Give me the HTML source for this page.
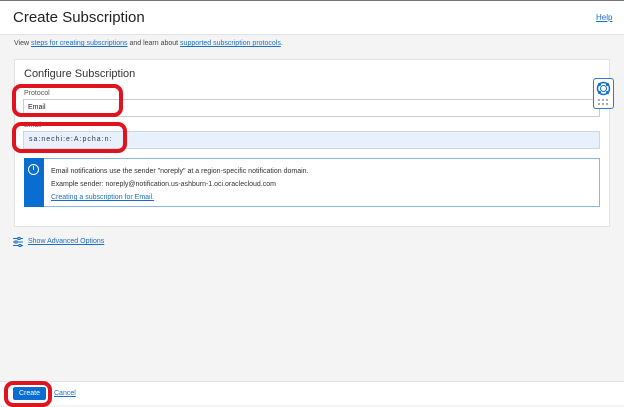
<!DOCTYPE html>
<html><head><style>
*{margin:0;padding:0;box-sizing:border-box}
body{width:624px;height:405px;background:#f4f4f4;font-family:"Liberation Sans",sans-serif;position:relative;overflow:hidden;color:#333}
.a{position:absolute}
a,.lk{color:#1a6fc4;text-decoration:underline}
.red{position:absolute;border:4.5px solid #e0141e;border-radius:9px}
</style></head><body>
<div class="a" style="left:0;top:0;width:624px;height:1px;background:#777"></div>
<div class="a" style="left:0;top:1px;width:624px;height:34px;background:#fff;border-bottom:1px solid #e4e4e4"></div>
<div class="a" style="left:13px;top:9px;font-size:15px;color:#222">Create Subscription</div>
<div class="a lk" style="left:596px;top:13px;font-size:8px">Help</div>
<div class="a" style="left:14px;top:40px;font-size:7px;color:#444">View <span class="lk">steps for creating subscriptions</span> and learn about <span class="lk">supported subscription protocols</span>.</div>
<div class="a" style="left:14px;top:59px;width:596px;height:168px;background:#fff;border:1px solid #e2e2e2"></div>
<div class="a" style="left:24px;top:68px;font-size:11px;color:#333">Configure Subscription</div>
<div class="a" style="left:24px;top:90px;font-size:7px;color:#555">Protocol</div>
<div class="a" style="left:23px;top:99px;width:577px;height:18px;border:1px solid #ccc;background:#fff"></div>
<div class="a" style="left:28px;top:104px;font-size:7px;color:#222">Email</div>
<div class="a" style="left:24px;top:122px;font-size:7px;color:#555">Email</div>
<div class="a" style="left:23px;top:131px;width:577px;height:18px;border:1px solid #c8d8ec;background:#e8f0fb"></div>
<div class="a" style="left:29px;top:136px;font-size:7px;color:#335;letter-spacing:1px">sa:nechi:e:A:pcha:n:</div>
<div class="a" style="left:24px;top:158px;width:576px;height:49px;border:1px solid #8ab8e6;background:#fff"></div>
<div class="a" style="left:24px;top:158px;width:20px;height:49px;background:#0a6ed1"></div>
<div class="a" style="left:28px;top:164px;width:11px;height:11px;border:1.5px solid #fff;border-radius:50%;color:#fff;font-size:7px;text-align:center;line-height:8px;font-weight:bold">i</div>
<div class="a" style="left:51px;top:165px;font-size:7px;color:#333;line-height:13px">Email notifications use the sender "noreply" at a region-specific notification domain.<br>Example sender: noreply@notification.us-ashburn-1.oci.oraclecloud.com<br><span class="lk">Creating a subscription for Email.</span></div>
<svg class="a" style="left:13px;top:237px" width="10" height="10" viewBox="0 0 10 10" fill="none" stroke="#1a6fc4" stroke-width="1"><path d="M0 1.5h10M0 5h10M0 8.5h10"/><rect x="5" y="0.5" width="2" height="2" fill="#fff"/><rect x="2" y="4" width="2" height="2" fill="#fff"/><rect x="6" y="7.5" width="2" height="2" fill="#fff"/></svg>
<div class="a lk" style="left:28px;top:238px;font-size:7px">Show Advanced Options</div>
<div class="a" style="left:593px;top:78px;width:21px;height:31px;border:1.5px solid #2a7ad8;border-radius:3px;background:#fff"></div>
<svg class="a" style="left:596px;top:81px" width="15" height="15" viewBox="0 0 15 15" fill="none" stroke="#1a6fc4"><circle cx="7.5" cy="7.5" r="6" stroke-width="1.5"/><circle cx="7.5" cy="7.5" r="3" stroke-width="1"/><g fill="#1a6fc4" stroke="none"><circle cx="3.5" cy="3.5" r="1.6"/><circle cx="11.5" cy="3.5" r="1.6"/><circle cx="3.5" cy="11.5" r="1.6"/><circle cx="11.5" cy="11.5" r="1.6"/></g></svg>
<svg class="a" style="left:598px;top:99px" width="11" height="7"><g fill="#aaa"><rect x="0" y="0" width="2" height="2"/><rect x="4" y="0" width="2" height="2"/><rect x="8" y="0" width="2" height="2"/><rect x="0" y="4" width="2" height="2"/><rect x="4" y="4" width="2" height="2"/><rect x="8" y="4" width="2" height="2"/></g></svg>
<div class="a" style="left:0;top:381px;width:624px;height:24px;background:#fff;border-top:1px solid #e2e2e2"></div>
<div class="a" style="left:13px;top:387px;width:33px;height:13px;background:#0a6ed1;color:#fff;font-size:7px;text-align:center;line-height:13px;border-radius:2px">Create</div>
<div class="a lk" style="left:54px;top:390px;font-size:7px">Cancel</div>
<div class="red" style="left:12px;top:84px;width:111px;height:33px"></div>
<div class="red" style="left:12px;top:122px;width:115px;height:31px"></div>
<div class="red" style="left:4px;top:381px;width:48px;height:26px"></div>
</body></html>
